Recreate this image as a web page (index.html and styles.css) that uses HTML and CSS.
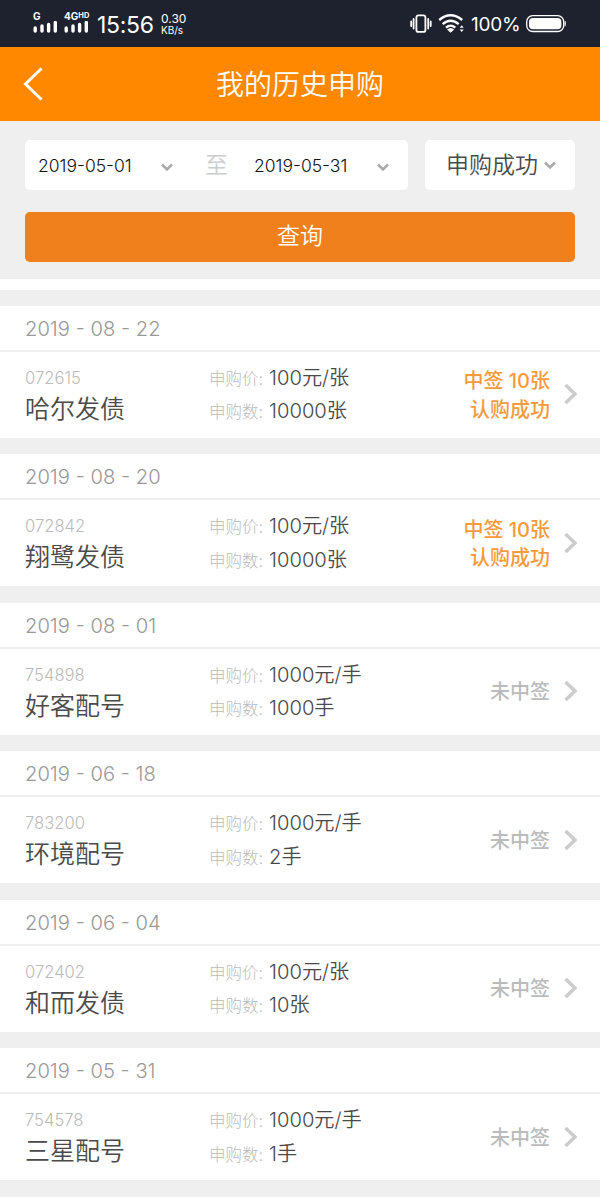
FILE: index.html
```
<!DOCTYPE html>
<html lang="zh-CN">
<head>
    <meta charset="UTF-8">
    <meta name="viewport" content="width=device-width, initial-scale=1.0">
    <title>我的历史申购</title>
    <link rel="stylesheet" href="styles.css">
</head>
<body>
    <div class="status-bar">
        <div class="signal">
            <span class="net">G</span>
            <svg width="25" height="12" viewBox="0 0 25 12"><path d="M2.2 7v3M9 5v5M15.600 3.400v6.600M22.300 1.500v8.500"/></svg>
        </div>
        <div class="signal signal-4g">
            <span class="net">4G<sup>HD</sup></span>
            <svg width="25" height="12" viewBox="0 0 25 12"><path d="M2.200 7v3M9 5v5M15.600 3.400v6.600M22.300 1.500v8.500"/></svg>
        </div>
        <span class="time">15:56</span>
        <div class="speed">0.30<br><small>KB/s</small></div>
        <svg class="vibrate" width="22" height="20" viewBox="0 0 22 20">
            <rect x="6.400" y="1.400" width="9" height="16.500" rx="2"/>
            <path d="M3.600 5v9.500M1.200 7.500v4.500M18.200 5v9.500M20.700 7.500v4.500"/>
        </svg>
        <svg class="wifi" width="27" height="20" viewBox="0 0 27 20">
            <path d="M1.200 6Q12.500-3.500 24.200 6M4.700 10.200Q12.500 3.400 20.700 10.200M8 13.700Q12.500 9.600 17.300 13.700"/>
            <path class="fill" d="M9 15.500q3.500-3 7.200 0l-3.600 3.200zM21.700 13.800l2-2.600 2 2.600zM21.700 15.400l2 2.600 2-2.600z"/>
        </svg>
        <span class="percent">100%</span>
        <svg class="battery" width="40" height="18" viewBox="0 0 40 18">
            <rect class="outline" x=".7" y=".7" width="37" height="15.800" rx="6"/>
            <rect x="3" y="3" width="32.400" height="11.200" rx="4"/>
            <path d="M38.600 5.500q1.300 0 1.300 3t-1.300 3z"/>
        </svg>
    </div>

    <header class="header">
        <svg class="back" width="20" height="34" viewBox="0 0 20 34"><path d="M18.500 1.500L2.500 17L18.500 32.500"/></svg>
        <h1>我的历史申购</h1>
    </header>

    <div class="search">
        <div class="filters">
            <div class="date-range">
                <span class="date-input">2019-05-01</span>
                <svg class="down" width="12" height="9" viewBox="0 0 12 9"><path d="M1 1.500L6 6.500L11 1.500"/></svg>
                <span class="to">至</span>
                <span class="date-input">2019-05-31</span>
                <svg class="down" width="12" height="9" viewBox="0 0 12 9"><path d="M1 1.500L6 6.500L11 1.500"/></svg>
            </div>
            <div class="type">
                <span>申购成功</span>
                <svg class="down" width="12" height="9" viewBox="0 0 12 9"><path d="M1 1.500L6 6.500L11 1.500"/></svg>
            </div>
        </div>
        <button type="button">查询</button>
    </div>

    <main class="list">
        <section class="record">
            <h2>2019 - 08 - 22</h2>
            <div class="detail">
                <div class="bond"><span class="code">072615</span><span class="name">哈尔发债</span></div>
                <div class="info">
                    <p><label>申购价:</label>100元/张</p>
                    <p><label>申购数:</label>10000张</p>
                </div>
                <div class="result success">中签 10张<br>认购成功</div>
                <svg class="next" width="13" height="22" viewBox="0 0 13 22"><path d="M1.500 2L11 11L1.500 20"/></svg>
            </div>
        </section>

        <section class="record">
            <h2>2019 - 08 - 20</h2>
            <div class="detail">
                <div class="bond"><span class="code">072842</span><span class="name">翔鹭发债</span></div>
                <div class="info">
                    <p><label>申购价:</label>100元/张</p>
                    <p><label>申购数:</label>10000张</p>
                </div>
                <div class="result success">中签 10张<br>认购成功</div>
                <svg class="next" width="13" height="22" viewBox="0 0 13 22"><path d="M1.500 2L11 11L1.500 20"/></svg>
            </div>
        </section>

        <section class="record">
            <h2>2019 - 08 - 01</h2>
            <div class="detail">
                <div class="bond"><span class="code">754898</span><span class="name">好客配号</span></div>
                <div class="info">
                    <p><label>申购价:</label>1000元/手</p>
                    <p><label>申购数:</label>1000手</p>
                </div>
                <div class="result">未中签</div>
                <svg class="next" width="13" height="22" viewBox="0 0 13 22"><path d="M1.500 2L11 11L1.500 20"/></svg>
            </div>
        </section>

        <section class="record">
            <h2>2019 - 06 - 18</h2>
            <div class="detail">
                <div class="bond"><span class="code">783200</span><span class="name">环境配号</span></div>
                <div class="info">
                    <p><label>申购价:</label>1000元/手</p>
                    <p><label>申购数:</label>2手</p>
                </div>
                <div class="result">未中签</div>
                <svg class="next" width="13" height="22" viewBox="0 0 13 22"><path d="M1.500 2L11 11L1.500 20"/></svg>
            </div>
        </section>

        <section class="record">
            <h2>2019 - 06 - 04</h2>
            <div class="detail">
                <div class="bond"><span class="code">072402</span><span class="name">和而发债</span></div>
                <div class="info">
                    <p><label>申购价:</label>100元/张</p>
                    <p><label>申购数:</label>10张</p>
                </div>
                <div class="result">未中签</div>
                <svg class="next" width="13" height="22" viewBox="0 0 13 22"><path d="M1.500 2L11 11L1.500 20"/></svg>
            </div>
        </section>

        <section class="record">
            <h2>2019 - 05 - 31</h2>
            <div class="detail">
                <div class="bond"><span class="code">754578</span><span class="name">三星配号</span></div>
                <div class="info">
                    <p><label>申购价:</label>1000元/手</p>
                    <p><label>申购数:</label>1手</p>
                </div>
                <div class="result">未中签</div>
                <svg class="next" width="13" height="22" viewBox="0 0 13 22"><path d="M1.500 2L11 11L1.500 20"/></svg>
            </div>
        </section>
    </main>
</body>
</html>
```
FILE: styles.css
```
* {
    box-sizing: border-box;
}

body {
    margin: 0;
    height: 1197px;
    overflow: hidden;
    background: #efefef;
    font-family: Inter, "Noto Sans CJK SC", sans-serif;
    font-weight: 350;
    white-space: nowrap;
}

h1, h2, p {
    margin: 0;
    font-weight: 350;
}

svg {
    display: block;
    flex: none;
    fill: none;
}

/* 状态栏 */
.status-bar {
    display: flex;
    align-items: flex-start;
    height: 46.5px;
    padding-left: 33px;
    background: #1e222e;
    color: #fff;
}

.signal {
    width: 31px;
    padding-top: 12px;
}

.signal-4g {
    width: 33px;
}

.signal svg {
    stroke: #fff;
    stroke-width: 3.4;
    stroke-linecap: round;
}

.net {
    display: block;
    height: 9px;
    font-size: 10px;
    font-weight: 700;
    line-height: 9px;
}

.net sup {
    font-size: 7.5px;
    line-height: 0;
    vertical-align: 2px;
}

.time {
    width: 64px;
    font-size: 23px;
    font-weight: 400;
    line-height: 50px;
    letter-spacing: -0.3px;
}

.speed {
    width: 249px;
    padding-top: 13px;
    font-size: 12px;
    font-weight: 400;
    line-height: 11px;
}

.speed small {
    font-size: 10px;
}

.vibrate {
    margin-top: 14px;
    stroke: #fff;
    stroke-width: 1.8;
    stroke-linecap: round;
}

.wifi {
    margin: 14px 0 0 6px;
    stroke: #fff;
    stroke-width: 2.3;
}

.wifi .fill {
    fill: #fff;
    stroke: none;
}

.percent {
    width: 55px;
    margin-left: 6px;
    font-size: 19px;
    font-weight: 400;
    line-height: 49px;
    letter-spacing: -0.2px;
}

.battery {
    margin-top: 15px;
    fill: #fff;
}

.battery .outline {
    fill: none;
    stroke: #fff;
    stroke-width: 1.3;
}

/* 标题 */
.header {
    display: flex;
    align-items: center;
    height: 74px;
    padding: 0 23px;
    background: #ff8800;
    color: #fff;
}

.back {
    stroke: #fff;
    stroke-width: 3;
}

.header h1 {
    flex: 1;
    margin-right: 20px;
    padding-top: 2px;
    font-size: 28px;
    line-height: 72px;
    text-align: center;
}

/* 查询条件 */
.search {
    height: 158px;
    padding: 19.5px 25px 0;
}

.filters {
    display: flex;
    gap: 17px;
    margin-bottom: 22px;
}

.date-range,
.type {
    display: flex;
    align-items: center;
    height: 50px;
    border-radius: 5px;
    background: #fff;
}

.date-range {
    width: 383px;
    padding-left: 13px;
}

.date-input {
    width: 123px;
    padding-top: 1px;
    color: #111;
    font-size: 17.5px;
}

.down {
    position: relative;
    top: 2px;
    stroke: #aaa;
    stroke-width: 2.5;
}

.to {
    margin: 0 26px 0 32px;
    padding-bottom: 4px;
    color: #ccc;
    font-size: 23px;
}

.type {
    width: 150px;
    padding-left: 21px;
    color: #4a4a4a;
    font-size: 23px;
}

.type span {
    padding-bottom: 4px;
}

.type .down {
    top: 0;
    margin-left: 6px;
}

button {
    display: block;
    width: 100%;
    height: 50px;
    padding: 0 0 2px;
    border: none;
    border-radius: 5px;
    background: #ef801b;
    color: #fff;
    font: inherit;
    font-size: 23px;
    line-height: 46px;
}

/* 申购记录 */
.list {
    border-top: 11.5px solid #fff;
}

.record {
    height: 132.1px;
    margin-top: 16.35px;
    background: #fff;
}

.record h2 {
    height: 46px;
    padding-left: 25px;
    border-bottom: 2px solid #efefef;
    color: #999;
    font-size: 20.2px;
    line-height: 45px;
}

.detail {
    display: flex;
    align-items: center;
    height: 85px;
    padding: 0 23px 0 25px;
}

.bond {
    width: 184px;
    padding-top: 5px;
}

.code,
.name {
    display: block;
}

.code {
    color: #bbb;
    font-size: 16.6px;
    font-weight: 300;
    line-height: 24px;
}

.name {
    color: #4a4a4a;
    font-size: 25px;
    line-height: 38px;
}

.info {
    flex: 1;
    color: #4a4a4a;
    font-size: 20.2px;
    line-height: 33.5px;
}

.info p {
    height: 33.5px;
}

.info label {
    display: inline-block;
    width: 60px;
    color: #bbb;
    font-size: 16.5px;
    font-weight: 300;
}

.result {
    margin-right: 14px;
    padding-top: 3px;
    color: #bbb;
    font-size: 20px;
    font-weight: 500;
    line-height: 28.5px;
    text-align: right;
}

.success {
    color: #f79a3b;
}

.next {
    stroke: #ccc;
    stroke-width: 3.6;
}
```
